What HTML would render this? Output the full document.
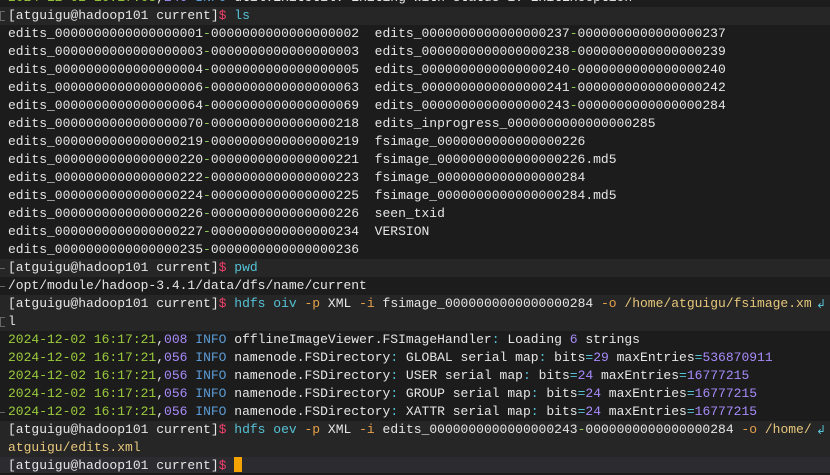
<!DOCTYPE html>
<html><head><meta charset="utf-8"><style>
html,body{margin:0;padding:0;}
body{width:830px;height:473px;overflow:hidden;background:#1c1c1c;position:relative;font-family:"Liberation Mono","DejaVu Sans Mono",monospace;font-size:13px;color:#e6e6e6;}
.l{position:absolute;left:0;width:830px;height:18px;line-height:18px;white-space:pre;padding-left:8px;box-sizing:border-box;}
.hl{background:#262626;}
.cur{background:#2b2b30;}
.g{color:#9ccc3c}.p{color:#a78bfa}.b{color:#5b9bd5}.c{color:#56c2d6}.r{color:#f0406a}.o{color:#e5a04b}.y{color:#e6c77b}.gr{color:#8fce5a}
.w{position:absolute;right:4px;color:#56c2d6;font-family:"DejaVu Sans",sans-serif;font-size:12px}
.m{position:absolute;left:0;width:5px;height:10px;border:1px solid #666;border-right:none;top:4px;box-sizing:border-box}
.k{position:absolute;left:0;width:5px;height:1px;background:#666;top:9px}
.cursor{display:inline-block;width:8px;height:15px;background:#f5a300;vertical-align:-3px}
</style></head><body>
<div class="l" style="top:-11px"><span class="g">2024-12-02 16:17:08</span>,<span class="p">240</span> <span class="b">INFO</span> util.ExitUtil: Exiting with status 1: ExitException</div>
<div class="l hl" style="top:7px"><span class="m"></span>[atguigu@hadoop101 current]<span class="r">$</span> <span class="c">ls</span></div>
<div class="l" style="top:25px">edits_0000000000000000001<span class="gr">-</span>0000000000000000002  edits_0000000000000000237<span class="gr">-</span>0000000000000000237</div>
<div class="l" style="top:43px">edits_0000000000000000003<span class="gr">-</span>0000000000000000003  edits_0000000000000000238<span class="gr">-</span>0000000000000000239</div>
<div class="l" style="top:61px">edits_0000000000000000004<span class="gr">-</span>0000000000000000005  edits_0000000000000000240<span class="gr">-</span>0000000000000000240</div>
<div class="l" style="top:79px">edits_0000000000000000006<span class="gr">-</span>0000000000000000063  edits_0000000000000000241<span class="gr">-</span>0000000000000000242</div>
<div class="l" style="top:97px">edits_0000000000000000064<span class="gr">-</span>0000000000000000069  edits_0000000000000000243<span class="gr">-</span>0000000000000000284</div>
<div class="l" style="top:115px">edits_0000000000000000070<span class="gr">-</span>0000000000000000218  edits_inprogress_0000000000000000285</div>
<div class="l" style="top:133px">edits_0000000000000000219<span class="gr">-</span>0000000000000000219  fsimage_0000000000000000226</div>
<div class="l" style="top:151px">edits_0000000000000000220<span class="gr">-</span>0000000000000000221  fsimage_0000000000000000226.md5</div>
<div class="l" style="top:169px">edits_0000000000000000222<span class="gr">-</span>0000000000000000223  fsimage_0000000000000000284</div>
<div class="l" style="top:187px">edits_0000000000000000224<span class="gr">-</span>0000000000000000225  fsimage_0000000000000000284.md5</div>
<div class="l" style="top:205px">edits_0000000000000000226<span class="gr">-</span>0000000000000000226  seen_txid</div>
<div class="l" style="top:223px">edits_0000000000000000227<span class="gr">-</span>0000000000000000234  VERSION</div>
<div class="l" style="top:241px">edits_0000000000000000235<span class="gr">-</span>0000000000000000236</div>
<div class="l hl" style="top:259px"><span class="k"></span>[atguigu@hadoop101 current]<span class="r">$</span> <span class="c">pwd</span></div>
<div class="l" style="top:277px"><span class="k"></span>/opt/module/hadoop-3.4.1/data/dfs/name/current</div>
<div class="l hl" style="top:295px">[atguigu@hadoop101 current]<span class="r">$</span> <span class="c">hdfs oiv</span> <span class="o">-p</span> XML <span class="o">-i</span> fsimage_0000000000000000284 <span class="o">-o</span> <span class="y">/home/atguigu/fsimage.xm</span><span class="w">↲</span></div>
<div class="l hl" style="top:313px"><span class="m"></span>l</div>
<div class="l" style="top:331px"><span class="g">2024-12-02 16:17:21</span>,<span class="p">008</span> <span class="b">INFO</span> offlineImageViewer.FSImageHandler<span class="c">:</span> Loading <span class="p">6</span> strings</div>
<div class="l" style="top:349px"><span class="g">2024-12-02 16:17:21</span>,<span class="p">056</span> <span class="b">INFO</span> namenode.FSDirectory<span class="c">:</span> GLOBAL serial map<span class="c">:</span> bits<span class="c">=</span><span class="p">29</span> maxEntries<span class="c">=</span><span class="p">536870911</span></div>
<div class="l" style="top:367px"><span class="g">2024-12-02 16:17:21</span>,<span class="p">056</span> <span class="b">INFO</span> namenode.FSDirectory<span class="c">:</span> USER serial map<span class="c">:</span> bits<span class="c">=</span><span class="p">24</span> maxEntries<span class="c">=</span><span class="p">16777215</span></div>
<div class="l" style="top:385px"><span class="g">2024-12-02 16:17:21</span>,<span class="p">056</span> <span class="b">INFO</span> namenode.FSDirectory<span class="c">:</span> GROUP serial map<span class="c">:</span> bits<span class="c">=</span><span class="p">24</span> maxEntries<span class="c">=</span><span class="p">16777215</span></div>
<div class="l" style="top:403px"><span class="k"></span><span class="g">2024-12-02 16:17:21</span>,<span class="p">056</span> <span class="b">INFO</span> namenode.FSDirectory<span class="c">:</span> XATTR serial map<span class="c">:</span> bits<span class="c">=</span><span class="p">24</span> maxEntries<span class="c">=</span><span class="p">16777215</span></div>
<div class="l hl" style="top:421px">[atguigu@hadoop101 current]<span class="r">$</span> <span class="c">hdfs oev</span> <span class="o">-p</span> XML <span class="o">-i</span> edits_0000000000000000243<span class="gr">-</span>0000000000000000284 <span class="o">-o</span> <span class="y">/home/</span><span class="w">↲</span></div>
<div class="l hl" style="top:439px"><span class="y">atguigu/edits.xml</span></div>
<div class="l cur" style="top:457px;height:16px">[atguigu@hadoop101 current]<span class="r">$</span> <span class="cursor"></span></div>
</body></html>
